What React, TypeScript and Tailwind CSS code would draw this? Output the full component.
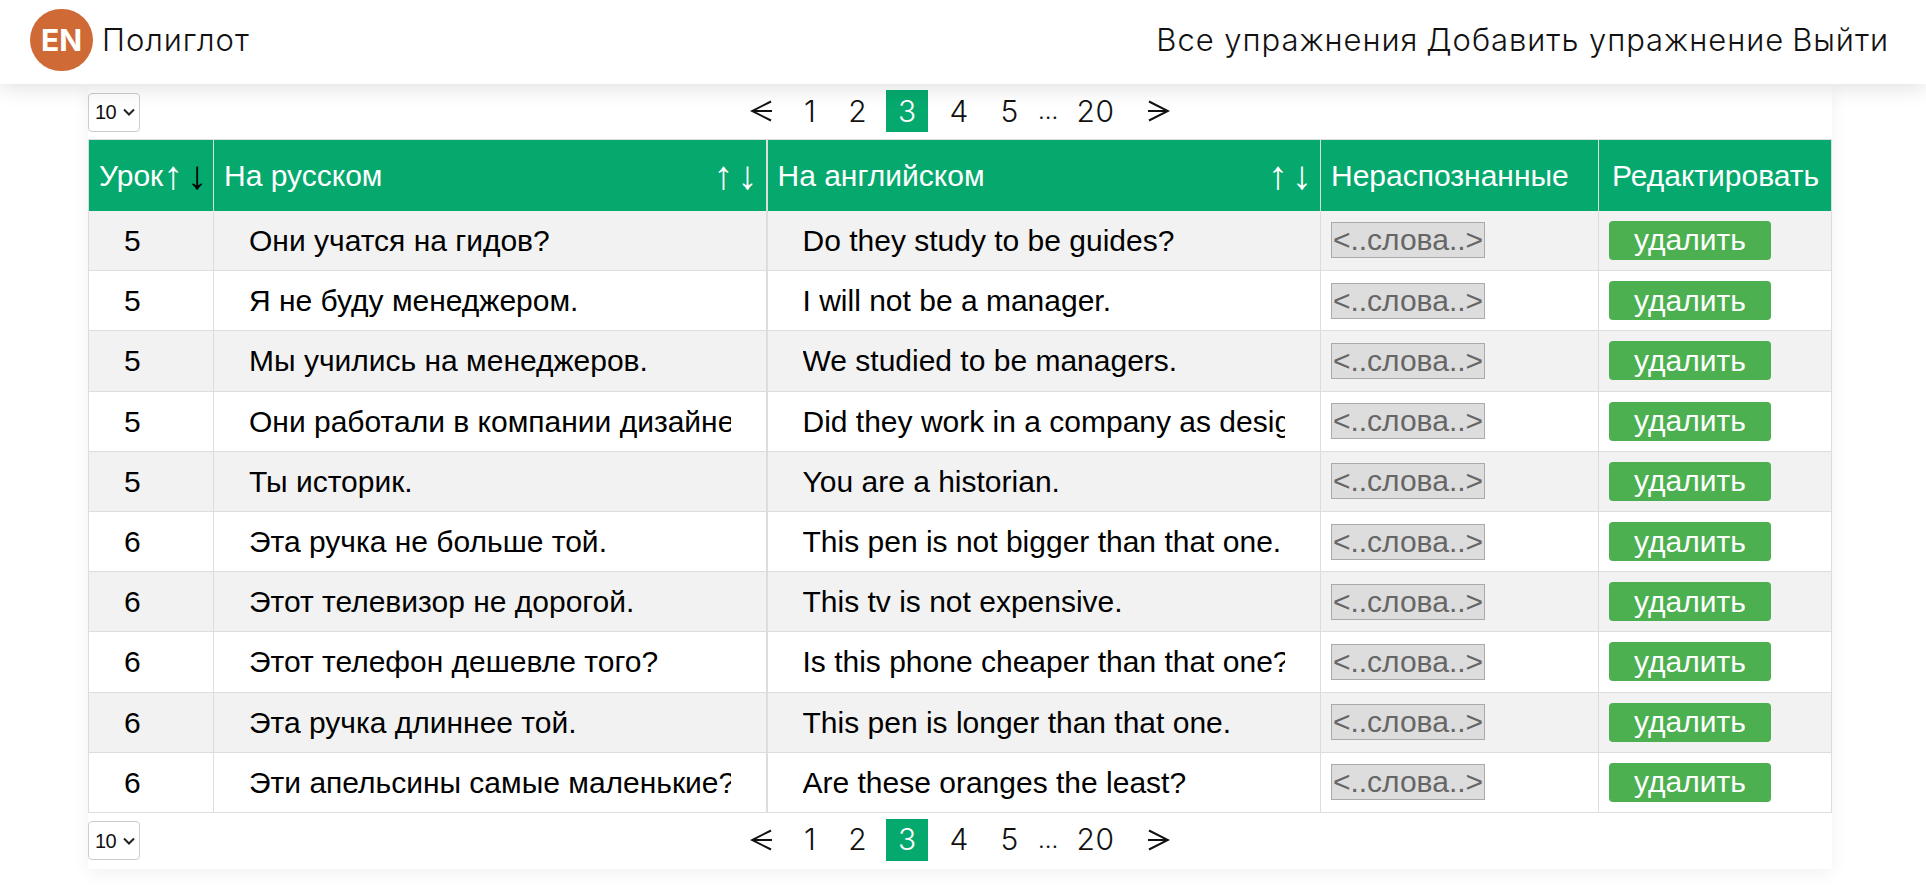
const rows = [
  ["5", "Они учатся на гидов?", "Do they study to be guides?"],
  ["5", "Я не буду менеджером.", "I will not be a manager."],
  ["5", "Мы учились на менеджеров.", "We studied to be managers."],
  ["5", "Они работали в компании дизайнерами?", "Did they work in a company as designers?"],
  ["5", "Ты историк.", "You are a historian."],
  ["6", "Эта ручка не больше той.", "This pen is not bigger than that one."],
  ["6", "Этот телевизор не дорогой.", "This tv is not expensive."],
  ["6", "Этот телефон дешевле того?", "Is this phone cheaper than that one?"],
  ["6", "Эта ручка длиннее той.", "This pen is longer than that one."],
  ["6", "Эти апельсины самые маленькие?", "Are these oranges the least?"],
];

function Chevron() {
  return (
    <svg width="12" height="8" viewBox="0 0 12 8" className="ml-[7px]" fill="none" stroke="#222" strokeWidth="2">
      <path d="M1 1.5l5 5 5-5" />
    </svg>
  );
}

function LeftArrow() {
  return (
    <svg width="22" height="22" viewBox="0 0 22 22" fill="none" stroke="#111" strokeWidth="2">
      <path d="M22 11H2M21 1.5L2 11l19 9.5" />
    </svg>
  );
}

function RightArrow() {
  return (
    <svg width="22" height="22" viewBox="0 0 22 22" fill="none" stroke="#111" strokeWidth="2">
      <path d="M0 11h20M1 1.5L20 11 1 20.5" />
    </svg>
  );
}

function Pager({ top }: { top?: boolean }) {
  return (
    <div className={`flex items-center relative ${top ? "h-[55px] pt-[1px]" : "h-[56px]"}`}>
      <div className="w-[52px] h-[39px] border border-[#ccc] rounded-[4px] bg-white flex items-center pl-[6px] text-[20px] text-[#111] font-['Liberation_Sans',sans-serif] tracking-[-0.5px]">
        10
        <Chevron />
      </div>
      <div className="absolute left-[662px] top-[6px] h-[42px] flex items-center text-[30px] font-light text-[#111] font-['Inter',sans-serif]">
        <span className="w-[22px] flex justify-center"><LeftArrow /></span>
        <span className="w-[34px] ml-[21px] text-center">1</span>
        <span className="w-[34px] ml-[13.5px] text-center">2</span>
        <span className="w-[42px] h-[42px] ml-[11.5px] bg-[#05a96e] text-white flex items-center justify-center">3</span>
        <span className="w-[34px] ml-[14px] text-center">4</span>
        <span className="w-[34px] ml-[16.5px] text-center">5</span>
        <span className="w-[20px] ml-[11.5px] text-center text-[24px] leading-[42px]">...</span>
        <span className="w-[44px] ml-[15.5px] text-center tracking-[0.5px]">20</span>
        <span className="w-[22px] ml-[30.5px] flex justify-center"><RightArrow /></span>
      </div>
    </div>
  );
}

function Arrows({ first }: { first?: boolean }) {
  return (
    <span className="text-[40px] leading-[34px] whitespace-nowrap flex gap-[4px]">
      <span className="text-white">↑</span>
      <span className={first ? "text-black" : "text-white"}>↓</span>
    </span>
  );
}

export default function App() {
  return (
    <div className="min-h-[896px] bg-white font-['Liberation_Sans',sans-serif] text-black">
      <header className="h-[84px] bg-white shadow-[0_4px_20px_rgba(0,0,0,0.12)] flex items-center justify-between pl-[30px] pr-[37px] pb-[4px] relative z-10 font-['Inter',sans-serif] font-light text-[31px] tracking-[0.95px] text-[#111]">
        <div className="flex items-center">
          <div className="w-[63px] h-[62px] rounded-full bg-[#cf6a36] text-white font-bold text-[30px] tracking-normal flex items-center justify-center">EN</div>
          <span className="ml-[9px]">Полиглот</span>
        </div>
        <nav className="flex gap-[8px]">
          <span>Все упражнения</span>
          <span>Добавить упражнение</span>
          <span>Выйти</span>
        </nav>
      </header>
      <main className="ml-[88px] w-[1744px] bg-white shadow-[0_4px_16px_rgba(0,0,0,0.06)]">
        <Pager top />
        <table className="w-[1743px] table-fixed border-collapse border border-[#ddd]">
          <colgroup>
            <col className="w-[125px]" />
            <col className="w-[553px]" />
            <col className="w-[554px]" />
            <col className="w-[278px]" />
            <col className="w-[233px]" />
          </colgroup>
          <thead>
            <tr className="h-[71px] bg-[#05a96e] text-white text-[30px] text-left">
              <th className="font-normal border-r border-[#ddd] pl-[10px]">
                <div className="flex items-center justify-between pr-[8px] whitespace-nowrap"><span>Урок</span><Arrows first /></div>
              </th>
              <th className="font-normal border-r-2 border-[#ddd] pl-[10px]">
                <div className="flex items-center justify-between pr-[8px]"><span>На русском</span><Arrows /></div>
              </th>
              <th className="font-normal border-r border-[#ddd] pl-[10px]">
                <div className="flex items-center justify-between pr-[8px]"><span>На английском</span><Arrows /></div>
              </th>
              <th className="font-normal border-r border-[#ddd] pl-[10px]">Нераспознанные</th>
              <th className="font-normal pl-[13px]">Редактировать</th>
            </tr>
          </thead>
          <tbody>
            {rows.map((r, i) => (
              <tr key={i} className={`h-[60.2px] text-[30px] border-b border-[#ddd] ${i % 2 === 0 ? "bg-[#f2f2f2]" : "bg-white"}`}>
                <td className="border-r border-[#ddd] pl-[35px]">{r[0]}</td>
                <td className="border-r-2 border-[#ddd] px-[35px]">
                  <div className="overflow-hidden whitespace-nowrap">{r[1]}</div>
                </td>
                <td className="border-r border-[#ddd] px-[35px]">
                  <div className="overflow-hidden whitespace-nowrap">{r[2]}</div>
                </td>
                <td className="border-r border-[#ddd] pl-[10px]">
                  <span className="block w-[154px] h-[36px] leading-[33px] border border-[#aaa] bg-[#ddd] text-[#666] text-center whitespace-nowrap">&lt;..слова..&gt;</span>
                </td>
                <td className="pl-[10px]">
                  <button className="block w-[162px] h-[39px] rounded-[4px] bg-[#4caf50] text-white text-center leading-[38px]">удалить</button>
                </td>
              </tr>
            ))}
          </tbody>
        </table>
        <Pager />
      </main>
    </div>
  );
}
